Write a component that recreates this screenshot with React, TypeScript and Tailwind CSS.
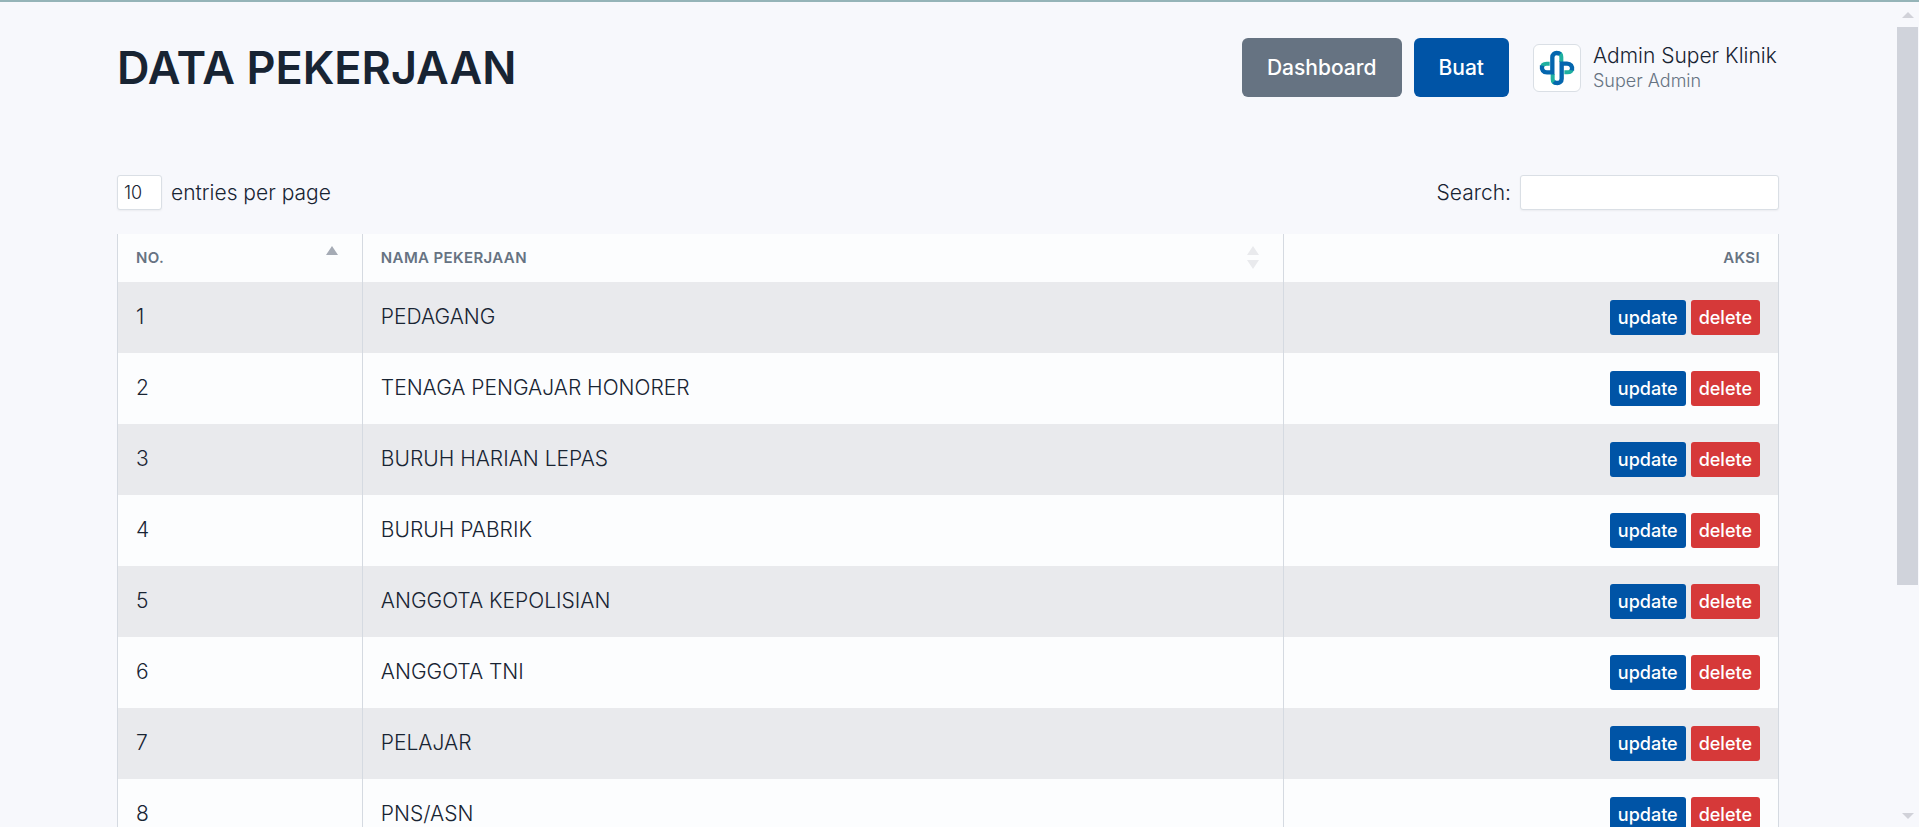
const jobs = [
  "PEDAGANG",
  "TENAGA PENGAJAR HONORER",
  "BURUH HARIAN LEPAS",
  "BURUH PABRIK",
  "ANGGOTA KEPOLISIAN",
  "ANGGOTA TNI",
  "PELAJAR",
  "PNS/ASN",
];

function ClinicLogo() {
  return (
    <svg viewBox="0 0 108 108" className="size-9 shrink-0" fill="none" aria-hidden="true">
      <g stroke="#1fb0a0" strokeWidth="12">
        <path d="M9 54C9 45 15 41 23 41H32" />
        <path d="M99 54C99 63 93 67 85 67H76" />
        <path d="M56 9C63 9 67 14 67 21V36" />
        <path d="M52 99C45 99 41 94 41 87V72" />
      </g>
      <g stroke="#0466ae" strokeWidth="13">
        <path d="M9 47C7 60 13 67 24 67H40V22C40 13 46 9 53 9C57 9 60 10 63 13" />
        <path d="M99 61C101 48 95 41 84 41H68V86C68 95 62 99 55 99C51 99 48 98 45 95" />
      </g>
    </svg>
  );
}

function SortArrows({ sorted = false }: { sorted?: boolean }) {
  return (
    <svg viewBox="0 0 12 24" className="h-6 w-3" aria-hidden="true">
      <path d="M6 0L12 9H0Z" fill={sorted ? "#a5abb5" : "#e9eaed"} />
      {!sorted && <path d="M6 23L12 14H0Z" fill="#e9eaed" />}
    </svg>
  );
}

function ScrollTrack() {
  return (
    <div className="flex w-[22px] shrink-0 flex-col items-center pt-2.5 pb-2" aria-hidden="true">
      <svg viewBox="0 0 12 6" className="h-1.5 w-3">
        <path d="M6 0L12 6H0Z" fill="#d1d2d9" />
      </svg>
      <div className="flex w-full grow flex-col pt-[9px] pr-px">
        <div className="h-[71%] bg-[#d0d3db]" />
      </div>
      <svg viewBox="0 0 12 6" className="h-1.5 w-3">
        <path d="M6 6L12 0H0Z" fill="#d1d2d9" />
      </svg>
    </div>
  );
}

export default function App() {
  return (
    <div className="flex h-screen flex-col border-t-2 border-[#95b4b8] bg-[#f7f8fc] font-['Inter',sans-serif] text-[21px] leading-[30px] font-light text-[#182433]">
      <div className="flex min-h-0 grow">
        <div className="grow overflow-y-auto pr-[118px] pl-[117px] [scrollbar-width:none]">
          <header className="flex items-center pt-9">
            <h1 className="grow text-[45px] leading-[59px] font-semibold">DATA PEKERJAAN</h1>
            <div className="flex items-center gap-3 leading-[29px] font-medium text-white">
              <a href="#dashboard" className="rounded-md bg-[#667382] px-[25px] py-[15px]">
                Dashboard
              </a>
              <a href="#buat" className="rounded-md bg-[#0054a6] px-[25px] py-[15px]">
                Buat
              </a>
            </div>
            <a href="#akun" className="ml-6 flex items-center gap-3">
              <span className="flex size-12 items-center justify-center rounded-md border border-[#dadfe5] bg-white">
                <ClinicLogo />
              </span>
              <span className="flex min-w-[186px] flex-col">
                <span className="leading-[26px]">Admin Super Klinik</span>
                <span className="text-lg leading-6 text-[#667382]">Super Admin</span>
              </span>
            </a>
          </header>

          <main className="pt-[78px]">
            <div className="flex items-center justify-between">
              <label className="flex items-center gap-[9px]">
                <select
                  defaultValue="10"
                  className="h-[35px] w-[45px] appearance-none rounded-[3px] border border-[#dadfe5] bg-white pl-1.5 text-lg shadow-xs"
                >
                  <option>10</option>
                  <option>25</option>
                  <option>50</option>
                  <option>100</option>
                </select>
                entries per page
              </label>
              <label className="flex items-center gap-[9px]">
                Search:
                <input
                  type="search"
                  className="h-[35px] w-[259px] rounded-[3px] border border-[#dadfe5] bg-white px-1.5 text-lg shadow-xs"
                />
              </label>
            </div>

            <table className="mt-6 w-full table-fixed border-collapse bg-[#fcfdfe] text-left">
              <colgroup>
                <col className="w-[14.74%]" />
                <col className="w-[55.48%]" />
                <col />
              </colgroup>
              <thead>
                <tr className="h-12 text-[15px] leading-6 tracking-wide text-[#667382]">
                  <th className="border-x border-[#d5dae1] pr-6 pl-[18px] font-semibold">
                    <div className="flex items-center justify-between">
                      NO.
                      <SortArrows sorted />
                    </div>
                  </th>
                  <th className="border-x border-[#d5dae1] pr-6 pl-[18px] font-semibold">
                    <div className="flex items-center justify-between">
                      NAMA PEKERJAAN
                      <SortArrows />
                    </div>
                  </th>
                  <th className="border-x border-[#d5dae1] px-[18px] text-right font-semibold">AKSI</th>
                </tr>
              </thead>
              <tbody>
                {jobs.map((job, i) => (
                  <tr key={job} className="h-[71px] odd:bg-[#e9eaed]">
                    <td className="border-x border-[#d5dae1] px-[18px] pb-0.5">{i + 1}</td>
                    <td className="border-x border-[#d5dae1] px-[18px] pb-0.5">{job}</td>
                    <td className="border-x border-[#d5dae1] px-[18px]">
                      <div className="flex justify-end gap-[5px] text-lg leading-[23px] font-medium text-white">
                        <button type="button" className="rounded-[3px] bg-[#0054a6] px-2 py-1.5">
                          update
                        </button>
                        <button type="button" className="rounded-[3px] bg-[#d63939] px-2 py-1.5">
                          delete
                        </button>
                      </div>
                    </td>
                  </tr>
                ))}
              </tbody>
            </table>
          </main>
        </div>
        <ScrollTrack />
      </div>
    </div>
  );
}
